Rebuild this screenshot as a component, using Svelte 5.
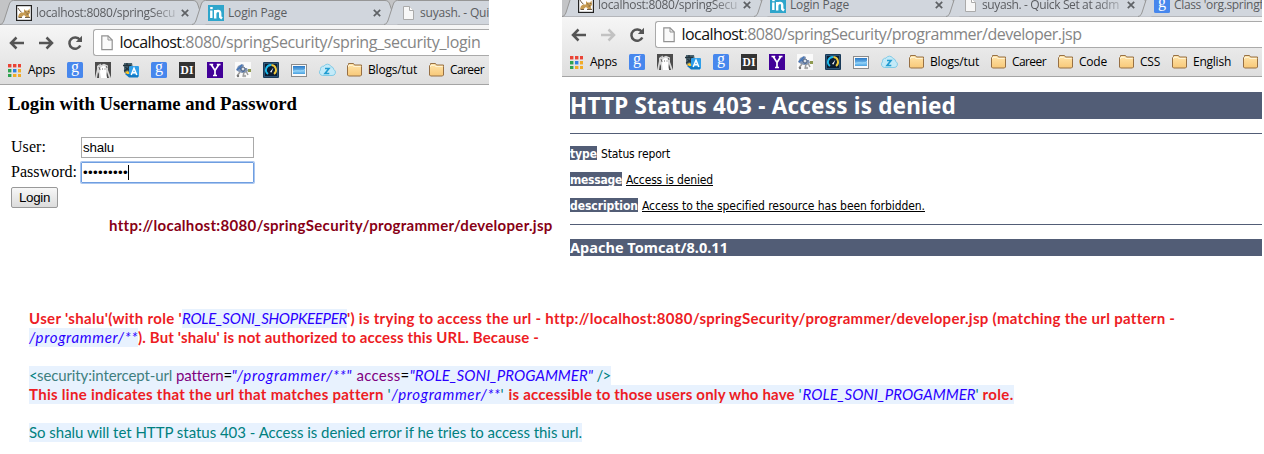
<script>
  // Spreads or tightens the letters of a text so that it takes the given width.
  function fit(node, width) {
    const natural = node.getBoundingClientRect().width;
    const count = [...node.textContent].length;
    node.style.letterSpacing = `${(width - natural) / count}px`;
  }

  const icons = ['google', 'photo', 'translate', 'google', 'di', 'yahoo', 'robot', 'gauge', 'picture', 'cloud'];

  const loginWindow = {
    forward: true,
    tabs: [
      { icon: 'tomcat', title: 'localhost:8080/springSecu', w: 139, fade: true },
      { icon: 'linked', title: 'Login Page', w: 59 },
      { icon: 'page', title: 'suyash. - Qui', w: 69 }
    ],
    host: 'localhost',
    hostW: 62,
    path: ':8080/springSecurity/spring_security_login',
    pathW: 299,
    folders: [
      { name: 'Blogs/tut', w: 49 },
      { name: 'Career', w: 34 }
    ]
  };

  const errorWindow = {
    forward: false,
    tabs: [
      { icon: 'tomcat', title: 'localhost:8080/springSecu', w: 139, fade: true },
      { icon: 'linked', title: 'Login Page', w: 59 },
      { icon: 'page', title: 'suyash. - Quick Set at adm', w: 137, fade: true },
      { icon: 'google', title: "Class 'org.springf", w: 89 }
    ],
    host: 'localhost',
    hostW: 62,
    path: ':8080/springSecurity/programmer/developer.jsp',
    pathW: 338,
    folders: [
      { name: 'Blogs/tut', w: 49 },
      { name: 'Career', w: 34 },
      { name: 'Code', w: 28 },
      { name: 'CSS', w: 20 },
      { name: 'English', w: 38 },
      { name: '', w: 0 }
    ]
  };

  const notes = [
    [
      ['b', "User 'shalu'(with role '", 153],
      ['i hl', 'ROLE_SONI_SHOPKEEPER', 165],
      ['b', "') is trying to access the url - http://localhost:8080/springSecurity/programmer/developer.jsp (matching the url pattern -", 827]
    ],
    [
      ['i hl', '/programmer/**', 109],
      ['b', "). But 'shalu' is not authorized to access this URL. Because -", 401]
    ],
    [],
    [
      ['teal hl', '<', 8],
      ['tag hl', 'security:intercept-url ', 139],
      ['attr hl', 'pattern', 47],
      ['hl', '=', 8],
      ['i hl', '"/programmer/**" ', 125],
      ['attr hl', 'access', 44],
      ['hl', '=', 9],
      ['i hl', '"ROLE_SONI_PROGAMMER" ', 187],
      ['teal hl', '/>', 14]
    ],
    [
      ['b hl', 'This line indicates that the url that matches pattern ', 358],
      ['teal hl', "'", 4],
      ['i hl', '/programmer/**', 109],
      ['teal hl', "' ", 8],
      ['b hl', 'is accessible to those users only who have ', 290],
      ['teal hl', "'", 4],
      ['i hl', 'ROLE_SONI_PROGAMMER', 173],
      ['teal hl', "' ", 7],
      ['b hl', 'role.', 31]
    ],
    [],
    [['teal hl', 'So shalu will tet HTTP status 403 - Access is denied error if he tries to access this url.', 553]]
  ];
</script>

{#snippet icon(kind)}
  <svg class="ico" width="16" height="16" viewBox="0 0 16 16">
    {#if kind === 'google'}
      <rect width="16" height="16" rx="1.5" fill="#4787ed" />
      <text class="serif" x="8" y="10.2" font-size="16" text-anchor="middle" fill="#fff">g</text>
    {:else if kind === 'photo'}
      <rect width="16" height="16" fill="#4c4c4c" />
      <path d="M0 16 2 7 2 4 5.500 1.500 6 3 9 1.800 13 3.500 13 8 16 16H14L12 10 11 14 12 16H4L4 12 3 10 2 16Z" fill="#d8d8d8" />
      <path d="M6 5 9 3.500 11 6 11 10 12 16H6L5 10Z" fill="#fff" />
      <path d="M4 5 5 8M11.500 4 12 6M7 7h1M9.500 7h1M3 2 4.500 3" stroke="#666" fill="none" />
    {:else if kind === 'translate'}
      <path d="M1 1H9L11 12H3L1 10Z" fill="#4b6470" />
      <path d="M0 3.500H8M4 1V4M6.500 4C5.500 7 3 8 1 9M2.500 5C4 8 6 8 8 9" stroke="#23343d" stroke-width="1.300" fill="none" />
      <path d="M2 10 5 13H8L5 9Z" fill="#ffc928" />
      <rect x="6" y="4" width="10" height="11" rx="1" fill="#2f9ee9" />
      <path d="M6 12 2 12 6 15.500H15V13Z" fill="#127ac4" />
      <path d="M8.200 13 11 6.200 13.800 13M9.200 10.700H12.800" stroke="#fff" stroke-width="1.500" fill="none" />
    {:else if kind === 'di'}
      <rect width="16" height="16" fill="#333" />
      <text class="di" x="8" y="12" font-size="11.5" text-anchor="middle" fill="#fff">DI</text>
    {:else if kind === 'yahoo'}
      <rect width="16" height="16" fill="#420098" />
      <path d="M2.500 2.500H6.200M9.800 2.500H13.500M4.300 2.700 8 8.500 11.700 2.700M8 8.500V13.500M6 13.500H10" stroke="#fff" stroke-width="1.700" fill="none" />
    {:else if kind === 'robot'}
      <rect width="16" height="16" fill="#fafafa" />
      <path d="M1 8 3 4 7 2 9 3 8 6 12 6 13 9 10 11 7 11 4 10Z" fill="#8195b5" />
      <path d="M2 8 7 3M4 5 9 10" stroke="#4375b8" stroke-width="1.500" />
      <path d="M5 10 2 14M9 10 8 15M11 9 13 13" stroke="#9c9c9c" stroke-width="1.500" />
      <circle cx="8" cy="7" r="2" fill="#dbe2ea" stroke="#51617c" />
      <path d="M13 7h3v3h-3z" fill="#8f9a50" />
      <circle cx="3" cy="14" r="1.200" fill="#777" /><circle cx="10" cy="14" r="1.200" fill="#aaa" />
    {:else if kind === 'gauge'}
      <rect width="16" height="16" rx="1" fill="#193a59" />
      <rect x="1.500" y="1.500" width="13" height="13" fill="#0b1c30" stroke="#37668b" stroke-width=".7" />
      <path d="M5 12A5 5 0 0 1 8.500 3" stroke="#1dbbec" stroke-width="1.900" fill="none" />
      <path d="M8.500 3A5 5 0 0 1 11 12" stroke="#f0cb3d" stroke-width="1.900" fill="none" />
      <path d="M7 10 10.500 5.500 8.500 10.500Z" fill="#fff" />
    {:else if kind === 'picture'}
      <defs><linearGradient id="sky" x2="0" y2="1"><stop offset="0" stop-color="#2a79c7" /><stop offset=".7" stop-color="#7cc4f1" /><stop offset="1" stop-color="#4ba1df" /></linearGradient></defs>
      <rect x=".5" y="2.500" width="15" height="12" fill="#fafafa" stroke="#8b8b8b" />
      <rect x="2" y="4" width="12" height="8" fill="url(#sky)" />
      <path d="M2 9C6 7 10 10 14 7V8C10 11 6 8 2 10Z" fill="#9bd6f8" />
    {:else if kind === 'cloud'}
      <path d="M3.500 13.500A3.300 3.300 0 0 1 1.500 7.800 3 3 0 0 1 5 4.200 3.900 3.900 0 0 1 12 4.500 3.500 3.500 0 0 1 14.800 7.500 3.200 3.200 0 0 1 13 13.500Z" fill="#c3eaf8" stroke="#77c7e5" stroke-width=".9" />
      <path d="M6 6.500H10L6 11.500H10.300" stroke="#219cd0" stroke-width="1.600" fill="none" />
    {:else if kind === 'folder'}
      <defs><linearGradient id="fold" x2="0" y2="1"><stop offset="0" stop-color="#ffe5ab" /><stop offset="1" stop-color="#f8c878" /></linearGradient></defs>
      <path d="M.5 13V4L1.500 2.500V1.500H6.500L7.500 3H14.500V4.500L14.500 13 13.500 14H1.500Z" fill="url(#fold)" stroke="#977044" />
      <path d="M1.500 5V3.500H5.500L7 4.500H13.500" stroke="#fff3d2" fill="none" />
    {:else if kind === 'tomcat'}
      <rect x=".6" y=".6" width="14.800" height="14.800" fill="#fff" stroke="#222" stroke-width="1.200" />
      <path d="M2 12 3 9 5 7.500 8 7.500 8 4 9.500 5.500H12L13.500 3.500 14 8 12.500 9.500 13.500 12H10L8 10 5 12.500Z" fill="#c69b53" />
      <path d="M2 3 4 6 5.500 7M2.500 12.500H6M9 12.500H14M9.500 6.500 10 7.500M12.500 6 13 7M10.500 9H12.500" stroke="#635039" stroke-width=".9" fill="none" />
    {:else if kind === 'linked'}
      <rect width="16" height="16" fill="#2ea5cb" />
      <path d="M3.300 5.500V13M7.200 13.500V5M7.200 8.500C8 5.200 12.200 5 12.200 8.300V12L14 13.500" stroke="#fff" stroke-width="2.400" fill="none" />
      <rect x="2.200" y="2" width="2.500" height="2.200" fill="#fff" />
    {:else if kind === 'page'}
      <path d="M3.500 1.500H9.500L13.500 5.500V14.500H3.500Z" fill="#f7f7f7" stroke="#aaa" />
      <path d="M9.500 1.500V5.500H13.500" fill="#fff" stroke="#aaa" />
    {/if}
  </svg>
{/snippet}

{#snippet chrome(win)}
  <div class="tabs">
    {#each win.tabs as tab}
      <div class="tab">
        <svg class="shape" width="208" height="25" viewBox="0 0 208 25">
          <path d="M0 24.500C3 24 3.500 22 4.500 19L9 5C10 2 11 .5 13.500 .5H193C196 .5 197 2 198 5L202.500 19C203.500 22 204 24 207 24.500" fill="#d1d6dd" stroke="#969696" />
        </svg>
        <div class="tabrow">
          {@render icon(tab.icon)}
          <div class="title" class:fade={tab.fade}><span use:fit={tab.w}>{tab.title}</span></div>
          <svg class="close" width="8" height="8" viewBox="0 0 8 8"><path d="M.8.8 7.200 7.200M7.200.8.8 7.200" stroke="#5e6165" stroke-width="1.700" /></svg>
        </div>
      </div>
    {/each}
  </div>
  <div class="toolbar">
    <div class="nav">
      <svg width="16" height="14" viewBox="0 0 16 14"><path d="M15 7H2M7.500 1.500 2 7 7.500 12.500" fill="none" stroke="#555" stroke-width="2.500" /></svg>
      <svg width="16" height="14" viewBox="0 0 16 14"><path d="M1 7H14M8.500 1.500 14 7 8.500 12.500" fill="none" stroke={win.forward ? '#555' : '#c2c2c2'} stroke-width="2.500" /></svg>
      <svg width="16" height="16" viewBox="0 0 16 16"><path d="M12.800 4.800A5.700 5.700 0 1 0 13.300 10.500" fill="none" stroke="#555" stroke-width="2.500" /><path d="M15 .8V7H8.800Z" fill="#555" /></svg>
      <div class="omni">
        <svg width="12" height="16" viewBox="0 0 12 16"><path d="M.8.8H7L11.200 5V14.700H.8Z" fill="#fafafa" stroke="#929292" stroke-width="1.200" /><path d="M7 .8V5H11.200" fill="none" stroke="#929292" /></svg>
        <div class="url"><span class="host" use:fit={win.hostW}>{win.host}</span><span use:fit={win.pathW}>{win.path}</span></div>
      </div>
    </div>
    <div class="marks">
      <svg class="grid" width="13" height="13" viewBox="0 0 13 13">
        {#each ['#ea4335', '#ea4335', '#ea4335', '#2fa350', '#2f7fe0', '#f1ab27', '#2fa350', '#f1ab27', '#f1ab27'] as c, n}
          <rect x={(n % 3) * 5} y={Math.floor(n / 3) * 5} width="3.400" height="3.400" fill={c} />
        {/each}
      </svg>
      <span class="apps"><span use:fit={27}>Apps</span></span>
      {#each icons as kind}{@render icon(kind)}{/each}
      {#each win.folders as f}
        <div class="folder">{@render icon('folder')}{#if f.name}<span use:fit={f.w}>{f.name}</span>{/if}</div>
      {/each}
    </div>
  </div>
{/snippet}

<main>
  <div class="windows">
    <section class="left">
      <div class="browser">{@render chrome(loginWindow)}</div>
      <div class="login">
        <h3><span use:fit={289}>Login with Username and Password</span></h3>
        <div class="form">
          <span class="label"><span use:fit={35}>User:</span></span>
          <div class="input"><span use:fit={31}>shalu</span></div>
          <span class="label"><span use:fit={66}>Password:</span></span>
          <div class="input focus"><span use:fit={45}>•••••••••</span><i class="caret"></i></div>
        </div>
        <button><span use:fit={31}>Login</span></button>
      </div>
      <p class="target"><span use:fit={443}>http://localhost:8080/springSecurity/programmer/developer.jsp</span></p>
    </section>
    <section class="right">
      <div class="browser"><div class="raise">{@render chrome(errorWindow)}</div></div>
      <div class="error">
        <h1><span use:fit={386}>HTTP Status 403 - Access is denied</span></h1>
        <hr />
        <p><b><span use:fit={27}>type</span></b><span use:fit={69}>Status report</span></p>
        <p><b><span use:fit={52}>message</span></b><u use:fit={87}>Access is denied</u></p>
        <p><b><span use:fit={68}>description</span></b><u use:fit={283}>Access to the specified resource has been forbidden.</u></p>
        <hr class="second" />
        <h4><span use:fit={158}>Apache Tomcat/8.0.11</span></h4>
      </div>
    </section>
  </div>
  <div class="notes">
    {#each notes as line}
      <div class="line">
        {#each line as [cls, text, w]}<span class={cls} use:fit={w}>{text}</span>{/each}
      </div>
    {/each}
  </div>
</main>

<style>
  :global(body) { margin: 0; background: #fff; }
  main { width: 1264px; height: 454px; overflow: hidden; background: #fff; color: #000; }
  span, u { white-space: pre; flex: none; }
  svg { display: block; flex: none; }
  .ico { overflow: visible; }
  .windows { display: grid; grid-template-columns: 562px 700px; height: 309px; }
  .browser { height: 85px; overflow: hidden; font-family: 'Open Sans', 'Noto Sans', sans-serif; }
  .left .browser { width: 489px; }
  .right .browser { height: 77px; }
  .raise { margin-top: -8px; }

  .tabs { display: flex; height: 25px; background: #c3c4c6; box-shadow: inset 0 -1px #969696; overflow: hidden; }
  .tab { flex: none; width: 192px; height: 25px; display: grid; }
  .shape, .tabrow { grid-area: 1 / 1; }
  .tabrow { display: flex; align-items: center; padding: 5px 0 0 16px; height: 16px; }
  .title { width: 140px; margin: 0 5px 0 4px; overflow: hidden; font-size: 12px; line-height: 16px; height: 16px; color: #5b5d61; display: flex; }
  .fade { mask-image: linear-gradient(90deg, #000 115px, rgba(0, 0, 0, .25) 139px); }

  .toolbar { height: 60px; box-sizing: border-box; border-bottom: 1px solid #a4a4a4; background: linear-gradient(#f6f6f6, #dedede); overflow: hidden; }
  .nav { display: flex; align-items: center; height: 35px; padding-left: 9px; }
  .nav > svg { margin-right: 13px; }
  .nav > svg:nth-child(3) { margin-right: 10px; }
  .omni { flex: 1; height: 25px; border: 1px solid #aaa; border-right: 0; border-radius: 3px 0 0 3px; background: #fff; display: flex; align-items: center; padding-left: 7px; overflow: hidden; }
  .url { display: flex; margin: -2px 0 0 6.5px; font-size: 16px; line-height: 22px; color: #858585; }
  .host { color: #111; }
  .marks { display: flex; align-items: center; padding-left: 8px; height: 20px; font-size: 12px; line-height: 16px; gap: 12px; }
  .grid { margin-right: -5px; }
  .apps { width: 27px; display: flex; }
  .folder { display: flex; gap: 5px; }
  .serif { font-family: 'Liberation Serif', serif; }
  .di { font-family: 'Liberation Serif', serif; font-weight: bold; }

  .login { padding-left: 8px; font-family: 'Liberation Serif', serif; font-size: 16px; }
  h3 { margin: 0; padding-top: 8px; font-size: 18.72px; line-height: 22px; height: 44px; box-sizing: content-box; }
  .form { display: grid; grid-template-columns: 67px 173px; column-gap: 3px; row-gap: 4px; padding-left: 3px; }
  .label { line-height: 20px; height: 21px; }
  .input { height: 21px; box-sizing: border-box; border: 1px solid #a9a9a9; padding-left: 1px; display: flex; align-items: center; font: 13.33px 'Liberation Sans', sans-serif; }
  .focus { border-color: #6f9ee0; box-shadow: 0 0 0 1px #a9c6f0; border-radius: 1px; }
  .caret { width: 1px; height: 15px; background: #000; }
  button { display: block; margin: 4px 0 0 3px; width: 47px; height: 21px; box-sizing: border-box; padding: 0; border: 1px solid #999; border-radius: 2px; background: linear-gradient(#f7f7f7, #dcdcdc); color: #000; font: 13.33px 'Liberation Sans', sans-serif; }
  .target { margin: 8px 0 0 109px; font: bold 15px/19px Lato, sans-serif; color: #880015; }

  .error { padding: 15px 0 0 8px; font: 12px 'DejaVu Sans Condensed', 'DejaVu Sans', sans-serif; font-stretch: condensed; }
  h1, h4 { font-family: 'Noto Sans', 'Open Sans', sans-serif; font-stretch: normal; }
  h1 { margin: 0 0 14px; height: 27px; line-height: 27px; font-size: 22.5px; background: #525d76; color: #fff; }
  hr { margin: 0 0 12px; border: 0; height: 1px; background: #525d76; }
  .error p { display: flex; align-items: flex-start; gap: 4px; margin: 0 0 11px; height: 15px; line-height: 16px; }
  .error b { background: #525d76; color: #fff; height: 14px; display: flex; line-height: 16px; }
  u { text-underline-offset: 1px; }
  hr.second { margin: 0 0 14px; }
  h4 { margin: 0; height: 17px; line-height: 17px; font-size: 14.5px; background: #525d76; color: #fff; }

  .notes { padding-left: 29px; font: 15px/19px Lato, sans-serif; }
  .line { height: 19px; display: flex; }
  .line span { height: 19px; }
  .hl { background: #e8f2fe; }
  .b { font-weight: bold; color: #ed1c24; }
  .i { font-style: italic; color: #2a00ff; }
  .teal { color: #008080; }
  .tag { color: #3f7f7f; }
  .attr { color: #7f007f; }
</style>
